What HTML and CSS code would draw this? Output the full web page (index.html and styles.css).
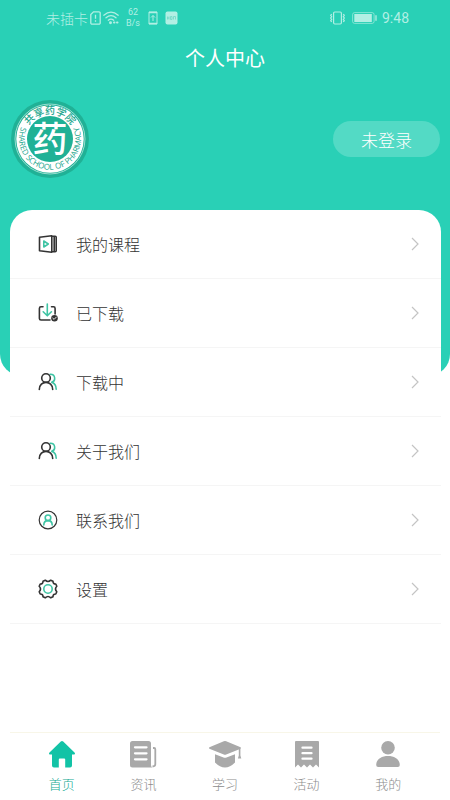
FILE: index.html
```html
<!DOCTYPE html>
<html lang="zh-CN">
<head>
<meta charset="utf-8">
<meta name="viewport" content="width=device-width, initial-scale=1">
<title>个人中心</title>
<link rel="stylesheet" href="styles.css">
</head>
<body>
<div class="app">
  <header class="hero">
    <div class="status">
      <div class="status-group network">
        <span>未插卡</span>
        <svg class="sim" width="11" height="14" viewBox="0 0 11 14" fill="none" stroke="currentColor" stroke-width="1.3"><path d="M3.5 .8H9a1.2 1.2 0 0 1 1.2 1.2v10A1.2 1.2 0 0 1 9 13.2H2A1.2 1.2 0 0 1 .8 12V3.500zM5.500 3.800v4M5.500 9.200v1.500"/></svg>
        <svg class="wifi" width="16" height="14" viewBox="0 0 16 14" fill="none" stroke="currentColor" stroke-width="1.3" stroke-linecap="round"><path d="M.8 4.200Q8-2 15.200 4.200M3 6.800q5-4.200 10 0M5.300 9.200q2.700-2.200 5.400 0"/><circle cx="7.500" cy="11.700" r=".8" fill="currentColor"/><path d="M11 11.500h.5M14 11.500h.5" stroke-width="2"/></svg>
        <span class="speed"><span>62</span><span>B/s</span></span>
        <svg class="upload" width="10" height="14" viewBox="0 0 10 14" fill="none" stroke="currentColor"><path d="M1 1h8v12H1z"/><path d="M1 1.500h8M1 12.500h8" stroke-width="1.500"/><path d="M5 10V4.500M3 6.500l2-2 2 2"/></svg>
        <svg class="badge" width="13" height="14" viewBox="0 0 13 14"><rect x=".5" y=".5" width="12" height="13" rx="2" fill="currentColor"/><path d="M2.500 5.500v3m0-1.500h1.500m0-1.500v3M5.500 5.500h1.500v3H5.500zM8.500 8.500v-3h2v3" fill="none" stroke="#6fd8c5" stroke-width=".8"/></svg>
      </div>
      <div class="status-group">
        <svg class="vibrate" width="17" height="14" viewBox="0 0 17 14" fill="none" stroke="currentColor" stroke-width="1.2"><rect x="4.600" y="1" width="7.800" height="12" rx="1.200"/><path d="M2.700 3 1.700 4.300l1 1.400-1 1.300 1 1.400-1 1.300 1 1.300M14.300 3l1 1.300-1 1.400 1 1.300-1 1.400 1 1.300-1 1.300"/></svg>
        <svg class="battery" width="25" height="12" viewBox="0 0 25 12"><rect x=".6" y=".6" width="21.500" height="10.800" rx="2" fill="none" stroke="currentColor" opacity=".65"/><rect x="2.300" y="2" width="17.500" height="8" fill="currentColor"/><path d="M24 3.300v5.400" stroke="currentColor" stroke-width="1.3"/></svg>
        <time class="clock">9:48</time>
      </div>
    </div>
    <h1 class="title">个人中心</h1>
    <div class="profile">
      <svg class="logo" width="78" height="78" viewBox="-39 -39 78 78" role="img" aria-label="共享药学院">
        <defs>
          <path id="arc-top" d="M-25 0A25 25 0 0 1 25 0"/>
          <path id="arc-bottom" d="M-23 -21A31 31 0 1 0 23 -21"/>
        </defs>
        <circle r="39" fill="#20b196"/>
        <circle r="35" fill="none" stroke="#c9f1e8" stroke-width=".7"/>
        <circle r="33.700" fill="#fff"/>
        <circle r="23" fill="#20b196"/>
        <text class="logo-cn"><textPath href="#arc-top" startOffset="50%">共享药学院</textPath></text>
        <text class="logo-en"><textPath href="#arc-bottom" startOffset="50%">SHARED SCHOOL OF PHARMACY</textPath></text>
        <text class="logo-mark" y="13">药</text>
      </svg>
      <button class="login" type="button">未登录</button>
    </div>
  </header>

  <main class="card">
    <a class="row" href="#courses">
      <svg class="icon" viewBox="0 0 20 20"><path class="ink" d="M1.500 3.200 13.800 1.800v16.400L1.500 16.800zM14 2.300h3.200a1 1 0 0 1 1 1v13.400a1 1 0 0 1-1 1H14M16.200 2.500v15"/><path class="accent" d="M5.800 7v6l4.500-3z"/></svg>
      <span class="label">我的课程</span>
      <svg class="chevron" viewBox="0 0 8 14"><path d="m1 1 6 6-6 6"/></svg>
    </a>
    <a class="row" href="#downloaded">
      <svg class="icon" viewBox="0 0 20 20"><path class="ink" d="M5 3.800H3a1.600 1.600 0 0 0-1.600 1.600v10A1.600 1.600 0 0 0 3 17h9M13.500 3.800h2a1.600 1.600 0 0 1 1.600 1.600V11"/><path class="accent" d="M9.300 1v11.500M5.200 8.800l4.100 4 4.100-4"/><circle cx="16.500" cy="15.200" r="3.300" fill="#333"/><path d="m14.800 15.200 1.300 1.200 2.200-2.300" fill="none" stroke="#fff" stroke-width=".9"/></svg>
      <span class="label">已下载</span>
      <svg class="chevron" viewBox="0 0 8 14"><path d="m1 1 6 6-6 6"/></svg>
    </a>
    <a class="row" href="#downloading">
      <svg class="icon" viewBox="0 0 20 20"><path class="accent" d="M12.200 2.200c5.500-.2 5.800 7 1.500 8 3 1 4.500 3.500 4.500 7"/><circle class="ink" cx="8" cy="6" r="4.300"/><path class="ink" d="M1.300 17.500c0-9.500 13.400-9.500 13.400 0"/></svg>
      <span class="label">下载中</span>
      <svg class="chevron" viewBox="0 0 8 14"><path d="m1 1 6 6-6 6"/></svg>
    </a>
    <a class="row" href="#about">
      <svg class="icon" viewBox="0 0 20 20"><path class="accent" d="M12.200 2.200c5.500-.2 5.800 7 1.500 8 3 1 4.500 3.500 4.500 7"/><circle class="ink" cx="8" cy="6" r="4.300"/><path class="ink" d="M1.300 17.500c0-9.500 13.400-9.500 13.400 0"/></svg>
      <span class="label">关于我们</span>
      <svg class="chevron" viewBox="0 0 8 14"><path d="m1 1 6 6-6 6"/></svg>
    </a>
    <a class="row" href="#contact">
      <svg class="icon" viewBox="0 0 20 20"><circle class="ink thin" cx="10" cy="10" r="8.800"/><circle class="accent" cx="10" cy="7.800" r="2.800"/><path class="accent" d="M5.800 15c0-5.800 8.400-5.800 8.400 0"/></svg>
      <span class="label">联系我们</span>
      <svg class="chevron" viewBox="0 0 8 14"><path d="m1 1 6 6-6 6"/></svg>
    </a>
    <a class="row" href="#settings">
      <svg class="icon" viewBox="0 0 20 20"><path class="ink" d="M7.300 1.200Q10 3.800 12.700 1.200L15 2.200Q14.900 5.100 17.800 5L18.800 7.300Q16.200 10 18.800 12.700L17.800 15Q14.900 14.900 15 17.800L12.700 18.800Q10 16.200 7.300 18.800L5 17.800Q5.100 14.900 2.200 15L1.200 12.700Q3.800 10 1.200 7.300L2.200 5Q5.100 5.100 5 2.200Z"/><circle class="accent" cx="10" cy="10" r="4.200"/></svg>
      <span class="label">设置</span>
      <svg class="chevron" viewBox="0 0 8 14"><path d="m1 1 6 6-6 6"/></svg>
    </a>
  </main>

  <nav class="tabs">
    <a class="tab active" href="#home">
      <svg width="28" height="28" viewBox="0 0 28 28" fill="currentColor"><path d="M12.800 1.500a1.800 1.800 0 0 1 2.400 0l11.300 11c.9.900.5 2-.7 2H24v11a2 2 0 0 1-2 2h-4.800v-8a1 1 0 0 0-1-1h-4.400a1 1 0 0 0-1 1v8H6a2 2 0 0 1-2-2v-11H2.200c-1.200 0-1.600-1.100-.7-2z"/></svg>
      <span>首页</span>
    </a>
    <a class="tab" href="#news">
      <svg width="28" height="28" viewBox="0 0 28 28" fill="currentColor"><path fill-rule="evenodd" d="M3.500 1h16A2.500 2.500 0 0 1 22 3.500V25q0 1.500 1.200 2.500H3.500A2.500 2.500 0 0 1 1 25V3.500A2.500 2.500 0 0 1 3.500 1zM6 6.200a1 1 0 0 0 0 2.300h11.500a1 1 0 0 0 0-2.300zm0 6a1 1 0 0 0 0 2.300h11.500a1 1 0 0 0 0-2.300zm0 6a1 1 0 0 0 0 2.300h11.500a1 1 0 0 0 0-2.300z"/><path d="M24 8h1a1.300 1.300 0 0 1 1.300 1.300v15q0 2-2.800 2.200" fill="none" stroke="currentColor" stroke-width="1.8"/></svg>
      <span>资讯</span>
    </a>
    <a class="tab" href="#study">
      <svg width="34" height="28" viewBox="0 0 34 28" fill="currentColor"><path d="M15.800 1.300q1.200-.5 2.400 0L32 7q2 1 0 2L18.200 14.500q-1.200.5-2.400 0L2 9Q-.2 8 2 7z"/><path d="M7 14.200l8.500 3.300q1.500.6 3 0l8.500-3.300v8.300Q22 27.500 17 27.500T7 22.500z"/><path d="M30.800 8.500h1.600v7l.9 3h-3.400l.9-3z"/></svg>
      <span>学习</span>
    </a>
    <a class="tab" href="#events">
      <svg width="28" height="28" viewBox="0 0 28 28" fill="currentColor"><path fill-rule="evenodd" d="M3 1h22a1 1 0 0 1 1 1v25.500l-3-3-3 3-3-3-3 3-3-3-3 3-3-3-3 3V2a1 1 0 0 1 1-1zM9.500 6.500a1 1 0 0 0 0 2.300h9a1 1 0 0 0 0-2.300zm0 5.500a1 1 0 0 0 0 2.300h9a1 1 0 0 0 0-2.300zm0 5.500a1 1 0 0 0 0 2.300h9a1 1 0 0 0 0-2.300z"/></svg>
      <span>活动</span>
    </a>
    <a class="tab" href="#me">
      <svg width="28" height="28" viewBox="0 0 28 28" fill="currentColor"><circle cx="14" cy="7.800" r="6.800"/><path d="M2.200 25c0-12 23.600-12 23.600 0q0 2-2 2H4.200q-2 0-2-2z"/></svg>
      <span>我的</span>
    </a>
  </nav>
</div>
</body>
</html>
```
FILE: styles.css
```css
* {
  box-sizing: border-box;
}

body {
  margin: 0;
  background: #fff;
  color: #333;
  font-family: "Noto Sans CJK SC", sans-serif;
  font-weight: 300;
}

a {
  color: inherit;
  text-decoration: none;
}

.app {
  display: flex;
  flex-direction: column;
  min-height: 100vh;
}

.hero {
  padding-bottom: 198px;
  border-radius: 0 0 22px 22px;
  background: #29d0b6;
  color: #fff;
}

.status {
  display: flex;
  justify-content: space-between;
  align-items: center;
  height: 36px;
  padding: 0 41px 0 46px;
  color: #b2efe4;
  font-size: 14px;
}

.status-group {
  display: flex;
  align-items: center;
  gap: 4px;
}

.network {
  gap: 2px;
}

.speed {
  display: flex;
  flex-direction: column;
  align-items: center;
  margin: 0 6px 0 5px;
  font-family: Roboto, sans-serif;
  font-size: 9px;
  font-weight: 400;
  line-height: 11px;
}

.badge {
  margin-left: 5px;
}

.battery {
  margin: 0 1px 0 2px;
}

.clock {
  font-family: Roboto, sans-serif;
  font-weight: 400;
}

.title {
  margin: 0;
  font-size: 20px;
  font-weight: 400;
  line-height: 44px;
  text-align: center;
}

.profile {
  display: flex;
  justify-content: space-between;
  align-items: center;
  margin-top: 20px;
  padding: 0 10px 0 11px;
}

.logo-cn,
.logo-en,
.logo-mark {
  text-anchor: middle;
}

.logo-cn {
  fill: #20a58c;
  font-size: 10px;
  font-weight: 500;
}

.logo-en {
  fill: #20a58c;
  font-family: "Open Sans", sans-serif;
  font-size: 8px;
  font-weight: 400;
}

.logo-mark {
  fill: #fff;
  font-size: 35px;
  font-weight: 500;
}

.login {
  height: 36px;
  padding: 0 28px;
  border: 0;
  border-radius: 18px;
  background: #53dac5;
  color: #fff;
  font: inherit;
  font-size: 17px;
}

.card {
  margin: -166px 9px 0 10px;
  border-radius: 22px 22px 0 0;
  background: #fff;
}

.row {
  display: flex;
  align-items: center;
  height: 69px;
  padding: 0 22px 0 28px;
  border-bottom: 1px solid #f5f5f5;
  font-size: 16px;
}

.icon {
  width: 20px;
  height: 20px;
  margin-right: 18px;
  fill: none;
  stroke-width: 1.6;
  stroke-linejoin: round;
  stroke-linecap: round;
}

.ink {
  stroke: #333;
}

.thin {
  stroke-width: 1.2;
}

.accent {
  stroke: #3fc4a4;
}

.chevron {
  width: 8px;
  height: 14px;
  margin-left: auto;
  fill: none;
  stroke: #c4c4c4;
  stroke-width: 1.2;
}

.tabs {
  display: flex;
  height: 68px;
  margin: auto 10px 0;
  padding: 7px 11px 0;
  border-top: 1px solid #f8f6e8;
  color: #a9a9a9;
}

.tab {
  display: flex;
  flex: 1;
  flex-direction: column;
  align-items: center;
  gap: 6px;
  font-size: 13px;
  line-height: 20px;
}

.tab span {
  color: #8c8c8c;
}

.tab.active {
  color: #12c3a6;
}

.tab.active span {
  color: #22ab94;
}
```
